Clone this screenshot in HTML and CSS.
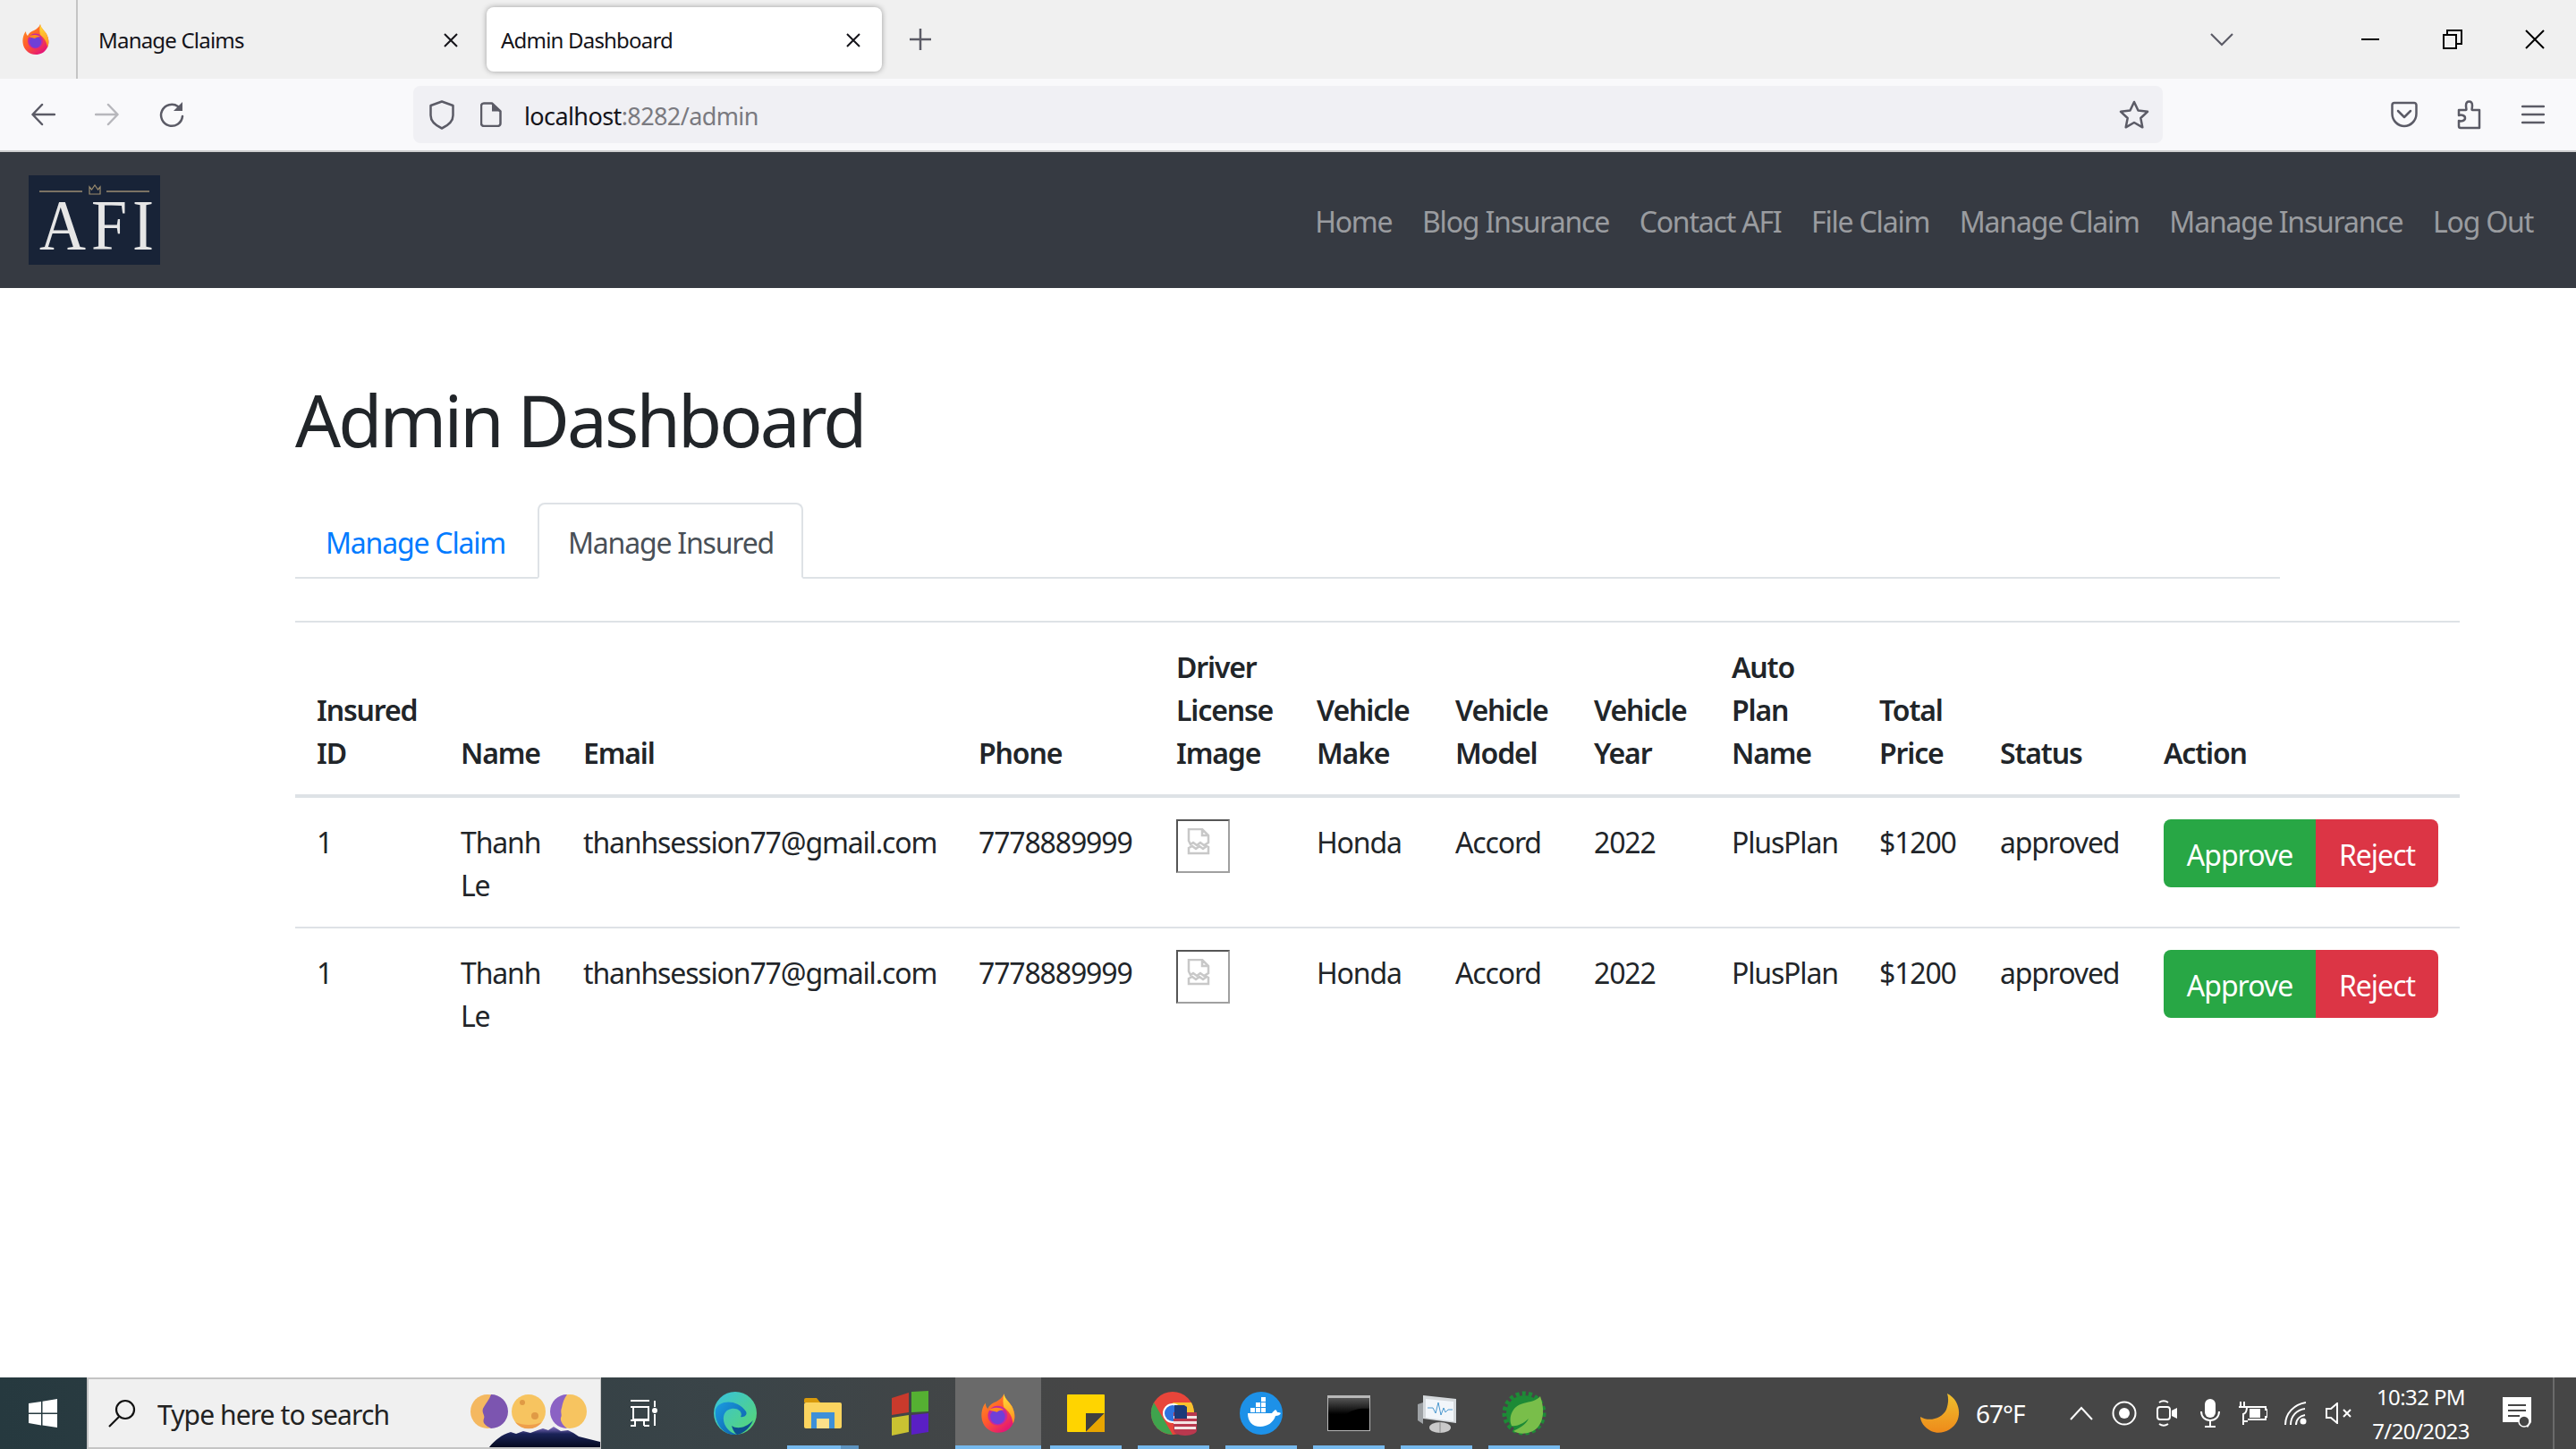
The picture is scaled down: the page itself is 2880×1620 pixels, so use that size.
FILE: index.html
```html
<!DOCTYPE html>
<html lang="en">
<head>
<meta charset="utf-8">
<title>Admin Dashboard</title>
<link rel="stylesheet" href="styles.css">
</head>
<body>
<svg class="defs" width="0" height="0" aria-hidden="true">
  <defs>
    <linearGradient id="ffBody" x1="0" y1="0" x2="0.7" y2="1"><stop offset="0" stop-color="#ff9a1f"/><stop offset=".55" stop-color="#ff5a2c"/><stop offset="1" stop-color="#e3127a"/></linearGradient>
    <linearGradient id="ffFlame" x1="0" y1="0" x2="0" y2="1"><stop offset="0" stop-color="#ffe13a"/><stop offset="1" stop-color="#ff8a1d"/></linearGradient>
    <symbol id="firefox" viewBox="0 0 32 36">
      <path d="M21 1c1 5 4 6 7 11 3 6 3 11 1 15-3 6-8 8-13 8C8 35 2 29 1.500 21.500 1 16 3 11 5 9c0 3 1 4 2 5 1-3 4-5 7-6 3-1.500 6-4 7-7z" fill="url(#ffBody)"/>
      <path d="M21 1c1 5 4 6 7 11 3 6 3 11 1 15-1-7-4-11-8-14-1-3-1-8 0-12z" fill="url(#ffFlame)"/>
      <circle cx="15.500" cy="20" r="8.500" fill="#c5289f"/>
      <circle cx="15.500" cy="21" r="6.500" fill="#6f3fd8"/>
      <path d="M8 15c3-2 8-3 13 0-3 0-5 1-6 2-3-1-5-1-7-2z" fill="#ff8a1d"/>
    </symbol>
  </defs>
</svg>

<div class="page">
  <header class="tabbar">
    <div class="tab-logo"><svg width="32" height="36"><use href="#firefox"/></svg></div>
    <div class="tab">
      <span>Manage Claims</span>
      <svg class="x" width="20" height="20" viewBox="0 0 20 20"><path d="M3 3l14 14M17 3L3 17"/></svg>
    </div>
    <div class="tab tab-active">
      <span>Admin Dashboard</span>
      <svg class="x" width="20" height="20" viewBox="0 0 20 20"><path d="M3 3l14 14M17 3L3 17"/></svg>
    </div>
    <svg class="plus" width="24" height="24" viewBox="0 0 24 24"><path d="M12 0v24M0 12h24"/></svg>
    <svg class="tablist" width="26" height="16" viewBox="0 0 26 16"><path d="M1 2l12 12L25 2"/></svg>
    <div class="winbtn"><svg width="20" height="4" viewBox="0 0 20 4"><rect y="1" width="20" height="2"/></svg></div>
    <div class="winbtn"><svg class="outline" width="22" height="22" viewBox="0 0 22 22"><path d="M1 6h14v15H1zM5 6V1h16v15h-6"/></svg></div>
    <div class="winbtn"><svg class="outline" width="24" height="24" viewBox="0 0 24 24"><path d="M2 2l20 20M22 2L2 22"/></svg></div>
  </header>

  <div class="toolbar">
    <div class="tool"><svg class="ico" width="28" height="26" viewBox="0 0 28 26"><path d="M27 13H3M13 2L2.500 13 13 24"/></svg></div>
    <div class="tool"><svg class="ico ico-off" width="28" height="26" viewBox="0 0 28 26"><path d="M1 13h24M15 2l10.500 11L15 24"/></svg></div>
    <div class="tool"><svg class="ico" width="28" height="30" viewBox="0 0 28 30"><path d="M21 6A12 12 0 1 0 26 17"/><path class="solid" d="M26 1v10H16z"/></svg></div>
    <div class="urlbar">
      <svg class="ico shield" width="28" height="33" viewBox="0 0 28 33"><path d="M14 1.500L26.500 6v11c0 7-6 11.500-12.500 14.500C7.500 28.500 1.500 24 1.500 17V6z"/></svg>
      <svg class="ico pageicon" width="24" height="28" viewBox="0 0 24 28"><path d="M4 1.500h9l9.500 9V24a3 3 0 0 1-3 3H4a3 3 0 0 1-3-3V4a3 3 0 0 1 3-2.500z"/><path class="solid" d="M13 1.500l9.500 9H13z"/></svg>
      <span class="url">localhost<span class="url-dim">:8282/admin</span></span>
      <svg class="ico star" width="34" height="32" viewBox="0 0 34 32"><path d="M17 2l4.500 9.500 10.500 1.300-7.700 7.200 2 10.300L17 25l-9.300 5.300 2-10.300L2 12.800l10.500-1.300z"/></svg>
    </div>
    <div class="tool-right">
      <div class="tool"><svg class="ico" width="30" height="30" viewBox="0 0 30 30"><path d="M4 2h22a2.500 2.500 0 0 1 2.500 2.500V14c0 8-6.500 14-13.500 14S1.500 22 1.500 14V4.500A2.500 2.500 0 0 1 4 2z"/><path d="M8 11l7 7 7-7"/></svg></div>
      <div class="tool"><svg class="ico ext" width="28" height="34" viewBox="0 0 28 34"><path d="M4 32h21V12H17c-1 0 0-2 0-5 0-6-7-6-7 0 0 3 1 5 0 5H2v6c3-1 7 0 7 3s-4 4-7 3v6a2 2 0 0 0 2 2z"/></svg></div>
      <div class="tool"><svg class="ico" width="26" height="22" viewBox="0 0 26 22"><path d="M1 2h24M1 11h24M1 20h24"/></svg></div>
    </div>
  </div>

  <nav class="navbar">
    <div class="brand">
      <div class="brand-top">
        <i class="rule"></i>
        <svg class="crown" width="14" height="12" viewBox="0 0 14 12"><path d="M1 3l2.500 3L7 1l3.500 5L13 3v8H1z"/></svg>
        <i class="rule"></i>
      </div>
      <span class="brand-name">AFI</span>
    </div>
    <ul class="nav-links">
      <li><a href="#">Home</a></li>
      <li><a href="#">Blog Insurance</a></li>
      <li><a href="#">Contact AFI</a></li>
      <li><a href="#">File Claim</a></li>
      <li><a href="#">Manage Claim</a></li>
      <li><a href="#">Manage Insurance</a></li>
      <li><a href="#">Log Out</a></li>
    </ul>
  </nav>

  <main class="content">
    <h1>Admin Dashboard</h1>
    <div class="nav-tabs">
      <a class="nav-tab" href="#">Manage Claim</a>
      <a class="nav-tab nav-tab-active" href="#">Manage Insured</a>
    </div>
    <table class="table">
      <colgroup>
        <col class="c1"><col class="c2"><col class="c3"><col class="c4"><col class="c5"><col class="c6">
        <col class="c7"><col class="c8"><col class="c9"><col class="c10"><col class="c11"><col class="c12">
      </colgroup>
      <thead>
        <tr>
          <th>Insured ID</th><th>Name</th><th>Email</th><th>Phone</th><th>Driver License Image</th>
          <th>Vehicle Make</th><th>Vehicle Model</th><th>Vehicle Year</th><th>Auto<br>Plan Name</th>
          <th>Total Price</th><th>Status</th><th>Action</th>
        </tr>
      </thead>
      <tbody>
        <tr>
          <td>1</td><td>Thanh Le</td><td>thanhsession77@gmail.com</td><td>7778889999</td>
          <td><div class="broken"><svg width="26" height="30" viewBox="0 0 26 30"><path d="M2 14V1h15l7 7v8l-5 3-4-3-4 3-4-3-3 2zM2 22l4-2 4 3 4-3 4 3 4-3 2 1v7H2zM17 1v7h7"/></svg></div></td>
          <td>Honda</td><td>Accord</td><td>2022</td><td>PlusPlan</td><td>$1200</td><td>approved</td>
          <td><div class="btn-group"><button class="btn btn-approve">Approve</button><button class="btn btn-reject">Reject</button></div></td>
        </tr>
        <tr>
          <td>1</td><td>Thanh Le</td><td>thanhsession77@gmail.com</td><td>7778889999</td>
          <td><div class="broken"><svg width="26" height="30" viewBox="0 0 26 30"><path d="M2 14V1h15l7 7v8l-5 3-4-3-4 3-4-3-3 2zM2 22l4-2 4 3 4-3 4 3 4-3 2 1v7H2zM17 1v7h7"/></svg></div></td>
          <td>Honda</td><td>Accord</td><td>2022</td><td>PlusPlan</td><td>$1200</td><td>approved</td>
          <td><div class="btn-group"><button class="btn btn-approve">Approve</button><button class="btn btn-reject">Reject</button></div></td>
        </tr>
      </tbody>
    </table>
  </main>

  <footer class="taskbar">
    <div class="start">
      <svg width="32" height="32" viewBox="0 0 32 32"><path fill="#fff" d="M0 5l14-2v12.500H0zM15.500 2.800L32 0v15.500H15.500zM0 17h14v12.500L0 27zM15.500 17H32v15l-16.500-2.500z"/></svg>
    </div>
    <div class="search">
      <svg class="search-ico" width="32" height="32" viewBox="0 0 32 32"><circle cx="20" cy="12" r="10"/><path d="M13 20L2 31"/></svg>
      <span class="search-text">Type here to search</span>
      <svg class="doodle" width="145" height="60" viewBox="0 0 145 60">
        <defs><linearGradient id="mtn" x1="0" y1="0" x2="0" y2="1"><stop offset="0" stop-color="#8a74c8"/><stop offset=".35" stop-color="#1b2358"/><stop offset="1" stop-color="#050a20"/></linearGradient></defs>
        <path fill="url(#mtn)" d="M21 60c6-8 14-14 24-17l6 2 8-3 8 2 8-3 6-2 6 2 6-4 8 5 8-1 6 3 6 4 24 6v6z"/>
        <circle cx="19" cy="20" r="19" fill="#f4b860"/><path fill="#7c55b0" d="M23 1a19 19 0 0 1 0 38c-6-3-10-6-8-11 2-4-4-7 0-13 2-4 6-8 8-14z"/>
        <circle cx="65" cy="20" r="19" fill="#f7c460"/><circle cx="58" cy="10" r="3" fill="#e09a45"/><circle cx="72" cy="25" r="4" fill="#e09a45"/><path fill="#ee9f4c" d="M50 32a19 19 0 0 0 30 0c-9 4-21 4-30 0z"/>
        <circle cx="111" cy="20" r="19" fill="#f7c460"/><path fill="#8b62c4" d="M108 1a19 19 0 0 0 0 38c-4-3-8-8-7-12 2-3-1-6 1-11 1-6 3-11 6-15z"/>
      </svg>
    </div>
    <div class="apps">
      <div class="app app-first"><svg class="taskview" width="32" height="30" viewBox="0 0 32 30"><path d="M1 1h21M1 8h21M4 9v13h17V9M1 23h21M1 29h6M16 29h6M6 23v6M16 23v6M28 1v7M28 16v13"/><circle cx="28" cy="12" r="3"/></svg></div>
      <div class="app">
        <svg width="48" height="48" viewBox="0 0 48 48">
          <defs><linearGradient id="edgeA" x1="0" y1="0" x2="1" y2="1"><stop offset="0" stop-color="#36c1e1"/><stop offset="1" stop-color="#5ad86b"/></linearGradient><linearGradient id="edgeB" x1="0" y1="0" x2="1" y2="1"><stop offset="0" stop-color="#1b9de2"/><stop offset="1" stop-color="#0c59a4"/></linearGradient></defs>
          <circle cx="24" cy="24" r="24" fill="url(#edgeA)"/>
          <path fill="url(#edgeB)" d="M2 20C6 9 26 8 36 22c2 4-2 7-6 6 3-5-3-10-10-9-8 1-11 9-8 17 2 5 7 10 14 12C12 50 0 36 2 20z"/>
          <path fill="#0d4f8e" d="M20 38c6 4 15 3 24-6-4 9-11 15-18 16-3-2-5-6-6-10z"/>
        </svg>
      </div>
      <div class="app app-run app-run-split">
        <svg width="42" height="36" viewBox="0 0 42 36"><path fill="#d99a0a" d="M0 3a2 2 0 0 1 2-2h12l4 5H0z"/><rect y="6" width="42" height="29" rx="2" fill="#fbd45f"/><path fill="#3e90d8" d="M8 17h26v18h-6V24H14v11H8z"/><rect x="14" y="24" width="14" height="11" fill="#fce08a"/></svg>
      </div>
      <div class="app">
        <svg width="44" height="50" viewBox="0 0 44 50"><path fill="#c93a2c" d="M1 8l19-6v22L1 27z"/><path fill="#55b032" d="M23 1l19-1v23l-19 1z"/><path fill="#c9c232" d="M1 30l19-3v19L1 50z"/><path fill="#5a1fc4" d="M23 27l19-2v21l-19 3z"/></svg>
      </div>
      <div class="app app-active app-run"><svg width="42" height="46"><use href="#firefox"/></svg></div>
      <div class="app app-run">
        <svg width="42" height="42" viewBox="0 0 42 42"><rect width="42" height="42" rx="1" fill="#ffd400"/><path fill="#3f3f3f" d="M21 21h21L21 42z"/><path fill="#e8a500" d="M42 21v21H21z"/></svg>
      </div>
      <div class="app app-run">
        <svg width="52" height="50" viewBox="0 0 52 50">
          <circle cx="25" cy="25" r="24" fill="#e8453a"/>
          <path fill="#3fa34d" d="M25 49A24 24 0 0 1 4 13l14 24z"/>
          <path fill="#f7c22e" d="M25 13h21a24 24 0 0 1-10 33z"/>
          <circle cx="25" cy="25" r="11" fill="#fff"/><circle cx="25" cy="25" r="9" fill="#2f73e0"/>
          <path fill="#b9384e" d="M26 24h26v20a13 6 0 0 1-26 0z"/>
          <path fill="#f4e4e4" d="M26 28h26v3H26zM26 34h26v3H26zM27 40h24v3H27z"/>
          <path fill="#1c3a78" d="M27 16h11l3 2v13H27z"/>
        </svg>
      </div>
      <div class="app app-run">
        <svg width="48" height="48" viewBox="0 0 48 48"><circle cx="24" cy="24" r="24" fill="#1d91e8"/><path fill="#fff" d="M9 24h27c1-2 3-3 4-4 1 1 2 2 2 3 2 0 3 0 4 1-1 2-3 3-6 3-2 7-9 12-17 12-9 0-14-6-14-15z"/><path fill="#fff" d="M12 18h5v5h-5zM18 18h5v5h-5zM24 18h5v5h-5zM18 12h5v5h-5zM24 12h5v5h-5zM24 6h5v5h-5z"/></svg>
      </div>
      <div class="app app-run">
        <svg width="48" height="40" viewBox="0 0 48 40"><defs><linearGradient id="term" x1="0" y1="0" x2="0" y2="1"><stop offset="0" stop-color="#555"/><stop offset=".5" stop-color="#000"/></linearGradient></defs><rect width="48" height="40" fill="#b8b8b8"/><rect x="1" y="3" width="46" height="36" fill="#000"/><path fill="url(#term)" d="M1 3h46v12C30 13 15 20 10 39H1z"/></svg>
      </div>
      <div class="app app-run">
        <svg width="46" height="44" viewBox="0 0 46 44"><path fill="#d5d9dc" d="M8 2l37 4v27l-37-5z"/><path fill="#f2f6fa" d="M11 6l31 3v22l-31-4z"/><path fill="none" stroke="#4a98cf" stroke-width="1" d="M13 16h6l3 6 3-12 3 14 3-8 2 5 3-3h5"/><path fill="#9ea2a5" d="M2 12l6-2v24l-6-4z"/><ellipse cx="27" cy="38" rx="12" ry="6" fill="#c9c9c9"/><path d="M27 32v12" stroke="#888"/></svg>
      </div>
      <div class="app app-run">
        <svg width="50" height="50" viewBox="0 0 50 50"><circle cx="25" cy="25" r="20" fill="#1d8a36"/><circle cx="25" cy="25" r="22" fill="none" stroke="#1d8a36" stroke-width="5" stroke-dasharray="4 3.200"/><path fill="#79be4a" d="M43 6c5 14 4 27-3 35-8 8-20 8-27 4 6-3 14-7 17-14-6 6-14 9-19 8C7 29 12 17 24 14c8-2 15-3 19-8z"/></svg>
      </div>
    </div>
    <div class="tray">
      <div class="weather">
        <svg width="44" height="44" viewBox="0 0 44 44"><defs><linearGradient id="moon" x1="0" y1="0" x2="0" y2="1"><stop offset="0" stop-color="#efc02e"/><stop offset="1" stop-color="#ee8a1a"/></linearGradient></defs><path fill="url(#moon)" d="M30 0c12 6 16 20 11 31-5 10-18 16-29 11C4 38 0 31 0 26c10 6 24 2 29-8 2-6 3-12 1-18z"/></svg>
        <span class="temp">67°F</span>
      </div>
      <div class="tray-ico"><svg class="line" width="26" height="16" viewBox="0 0 26 16"><path d="M1 15L13 2l12 13"/></svg></div>
      <div class="tray-ico"><svg class="line" width="28" height="28" viewBox="0 0 28 28"><circle cx="14" cy="14" r="12.500"/><circle class="fillw" cx="14" cy="14" r="6"/></svg></div>
      <div class="tray-ico"><svg class="line" width="24" height="30" viewBox="0 0 24 30"><rect x="1" y="8" width="14" height="14" rx="3"/><path class="fillw" d="M17 12l6-3v12l-6-3z"/><path d="M3 3c3-2 7-2 10 0M3 27c3 2 7 2 10 0"/></svg></div>
      <div class="tray-ico"><svg class="line" width="24" height="32" viewBox="0 0 24 32"><rect class="fillw" x="6" y="0" width="12" height="21" rx="6"/><path d="M2 14c0 6 4 10 10 10s10-4 10-10M12 24v6M6 31h12"/></svg></div>
      <div class="tray-ico"><svg class="line" width="32" height="26" viewBox="0 0 32 26"><path d="M6 0v5M2 0v5M0 6h9c0 4-1 7-4 8v12M10 6h20v3h2v8h-2v3H10M5 22h5"/><path class="fillw" d="M12 8h12v10H12z"/></svg></div>
      <div class="tray-ico"><svg class="line" width="26" height="26" viewBox="0 0 26 26"><path d="M1 26C1 13 11 3 24 1M7 26c0-10 7-17 16-18M13 26c0-6 4-10 10-11"/><circle class="fillw" cx="21" cy="22" r="3.500"/></svg></div>
      <div class="tray-ico"><svg class="line" width="30" height="24" viewBox="0 0 30 24"><path d="M1 7h5l7-6v22l-7-6H1zM20 8l8 8M28 8l-8 8"/></svg></div>
      <div class="clock"><span>10:32 PM</span><span>7/20/2023</span></div>
      <div class="notif"><svg width="32" height="36" viewBox="0 0 32 36"><path fill="#fff" d="M0 0h32v28l-4 6-6-6H0z"/><path stroke="#454545" stroke-width="2" d="M6 9h20M6 15h20M6 21h13"/><circle cx="24" cy="27" r="6" fill="#454545" stroke="#fff" stroke-width="1.500"/></svg></div>
      <div class="show-desktop"></div>
    </div>
  </footer>
</div>
</body>
</html>
```
FILE: styles.css
```css
* { box-sizing: border-box; }
html, body { margin: 0; padding: 0; height: 100%; overflow: hidden; background: #fff; }
body { font-family: "Noto Sans", "Open Sans", sans-serif; color: #212529; font-variant-ligatures: none; }
.defs { position: absolute; }
.page { height: 1620px; display: flex; flex-direction: column; }

/* browser chrome */
.tabbar { height: 88px; flex: none; display: flex; align-items: center; background: #f0f0f0; font-size: 24px; color: #15141a; letter-spacing: -0.8px; }
.tab-logo { width: 87px; height: 88px; display: flex; align-items: center; justify-content: center; border-right: 2px solid #c4c4c4; padding-right: 6px; }
.tab { width: 457px; height: 72px; display: flex; align-items: center; justify-content: space-between; padding: 1px 30px 0 23px; }
.tab-active { width: 442px; padding: 1px 22px 0 16px; background: #fff; border-radius: 8px; box-shadow: 0 0 6px rgba(0,0,0,.35); }
.x path { stroke: #15141a; stroke-width: 2; fill: none; }
.plus { margin-left: 31px; margin-right: auto; }
.plus path { stroke: #5b5b66; stroke-width: 2.5; fill: none; }
.tablist { margin-right: 107px; }
.tablist path { stroke: #5b5b66; stroke-width: 2.2; fill: none; }
.winbtn { width: 92px; height: 88px; display: flex; align-items: center; justify-content: center; padding-bottom: 1px; }
.outline path { stroke: #000; stroke-width: 2; fill: none; }

.toolbar { height: 82px; flex: none; display: flex; align-items: center; background: #f9f9fb; border-bottom: 2px solid #cfcfd1; padding-left: 12px; }
.tool { width: 72px; height: 64px; display: flex; align-items: center; justify-content: center; }
.ico path { stroke: #5b5b66; stroke-width: 2.5; fill: none; stroke-linejoin: round; stroke-linecap: round; }
.ico path.solid { fill: #5b5b66; stroke: none; }
.ico-off path { stroke: #b7b7bc; }
.ext { margin-left: 2px; }
.urlbar { width: 1956px; height: 64px; margin-left: 234px; display: flex; align-items: center; background: #f0f0f4; border-radius: 8px; padding: 0 15px 0 18px; font-size: 27px; color: #15141a; letter-spacing: -0.6px; }
.shield { flex: none; margin-right: 29px; }
.pageicon { flex: none; margin-right: 25px; }
.url { flex: 1; padding-top: 2px; }
.url-dim { color: #7a7a80; }
.tool-right { display: flex; margin-left: 234px; }

/* site navbar */
.navbar { height: 152px; flex: none; display: flex; align-items: center; justify-content: space-between; background: #363a42; padding: 26px 32px; }
.brand { width: 147px; height: 100px; background: #182337; padding: 10px 12px 0; display: flex; flex-direction: column; }
.brand-top { display: flex; align-items: center; justify-content: space-between; height: 12px; }
.rule { display: block; width: 48px; height: 2px; background: #7b7263; margin-top: 4px; }
.crown path { fill: none; stroke: #9b8c6e; stroke-width: 1.2; }
.brand-name { font-family: "Liberation Serif", serif; font-size: 72px; line-height: 72px; color: #e6e6e6; letter-spacing: 6px; white-space: nowrap; margin-top: 2px; transform: scaleY(1.11); transform-origin: 0 100%; }
.nav-links { list-style: none; margin: 0; padding: 0; display: flex; }
.nav-links a { display: block; padding: 18px 16.8px 14px; font-size: 32px; line-height: 48px; color: rgba(255,255,255,.5); text-decoration: none; letter-spacing: -1.2px; }
.nav-links li:last-child a { padding-right: 16px; }

/* content */
.content { flex: 1; padding: 99px 130px 0 330px; }
h1 { margin: 0 0 45px; font-size: 80px; line-height: 96px; font-weight: 400; letter-spacing: -2.9px; color: #212529; }
.nav-tabs { width: 2219px; display: flex; border-bottom: 2px solid #dee2e6; margin-bottom: 47px; height: 85px; }
.nav-tab { width: 271px; height: 85px; padding: 19px 0 0 32px; font-size: 32px; line-height: 48px; color: #007bff; text-decoration: none; border: 2px solid transparent; letter-spacing: -1.2px; }
.nav-tab-active { width: 297px; padding-left: 32px; color: #495057; background: #fff; border-color: #dee2e6 #dee2e6 #fff; border-radius: 8px 8px 0 0; }

.table { width: 2420px; table-layout: fixed; border-collapse: collapse; font-size: 32px; line-height: 48px; letter-spacing: -1.15px; }
.c1 { width: 161px; } .c2 { width: 137px; } .c3 { width: 442px; } .c4 { width: 221px; }
.c5 { width: 157px; } .c6 { width: 155px; } .c7 { width: 155px; } .c8 { width: 154px; }
.c9 { width: 165px; } .c10 { width: 135px; } .c11 { width: 183px; } .c12 { width: 355px; }
th { padding: 26px 0 22px 24px; vertical-align: bottom; text-align: left; font-weight: 600; border-top: 2px solid #dee2e6; border-bottom: 4px solid #dee2e6; }
td { padding: 26px 0 22px 24px; vertical-align: top; border-top: 2px solid #dee2e6; }
.broken { width: 60px; height: 60px; margin-top: -2px; border: 2px solid; border-color: #555 #a0a0a0 #a0a0a0 #555; padding: 8px 0 0 10px; }
.broken svg { display: block; }
.broken path { fill: none; stroke: #c8c8c8; stroke-width: 2.5; }
.btn-group { display: flex; margin: -2px 0 2px; }
.btn { height: 76px; border: 0; padding: 3px 0 0; color: #fff; font: inherit; letter-spacing: -1px; }
.btn-approve { width: 170px; background: #28a745; border-radius: 8px 0 0 8px; }
.btn-reject { width: 137px; background: #dc3545; border-radius: 0 8px 8px 0; }

/* taskbar */
.taskbar { height: 80px; flex: none; display: flex; background: linear-gradient(90deg, #26393f 0, #3a4448 28%, #464646 42%); color: #fff; }
.start { width: 97px; display: flex; align-items: center; justify-content: center; padding-right: 1px; }
.search { width: 575px; position: relative; display: flex; align-items: center; background: #f0f0f0; border: 2px solid #c4c4c4; border-right-width: 1px; padding-left: 21px; color: #222; overflow: hidden; }
.search-ico circle, .search-ico path { fill: none; stroke: #111; stroke-width: 2.2; }
.search-text { font-size: 30px; margin-left: 24px; letter-spacing: -0.9px; line-height: 40px; padding-top: 3px; }
.doodle { position: absolute; right: 0; top: 16px; }
.apps { display: flex; gap: 2px; }
.app { width: 96px; height: 80px; display: flex; align-items: center; justify-content: center; position: relative; }
.app-first { margin-right: 4px; }
.taskview path { fill: none; stroke: #fff; stroke-width: 2; }
.taskview circle { fill: #fff; }
.app-active { background: #6a6a6a; }
.app-run::after { content: ""; position: absolute; left: 8px; right: 8px; bottom: 0; height: 4px; background: #76b9ed; }
.app-active::after { left: 0; right: 0; }
.app-run-split::after { background: linear-gradient(90deg, #76b9ed 75%, #5c93c0 75%); }
.tray { margin-left: auto; display: flex; align-items: center; width: 733px; flex: none; }
.weather { width: 156px; display: flex; align-items: center; flex: none; }
.temp { font-size: 28px; margin-left: 18px; letter-spacing: -1px; }
.tray-ico { width: 48px; flex: none; display: flex; align-items: center; justify-content: center; }
.line path, .line rect, .line circle { fill: none; stroke: #fff; stroke-width: 2; }
.line .fillw { fill: #fff; stroke: none; }
.clock { width: 135px; flex: none; display: flex; flex-direction: column; align-items: center; font-size: 24px; line-height: 38px; letter-spacing: -0.6px; padding-top: 1px; }
.notif { width: 80px; flex: none; display: flex; align-items: center; justify-content: center; }
.show-desktop { width: 17px; height: 80px; border-left: 2px solid #6a6a6a; }
```
